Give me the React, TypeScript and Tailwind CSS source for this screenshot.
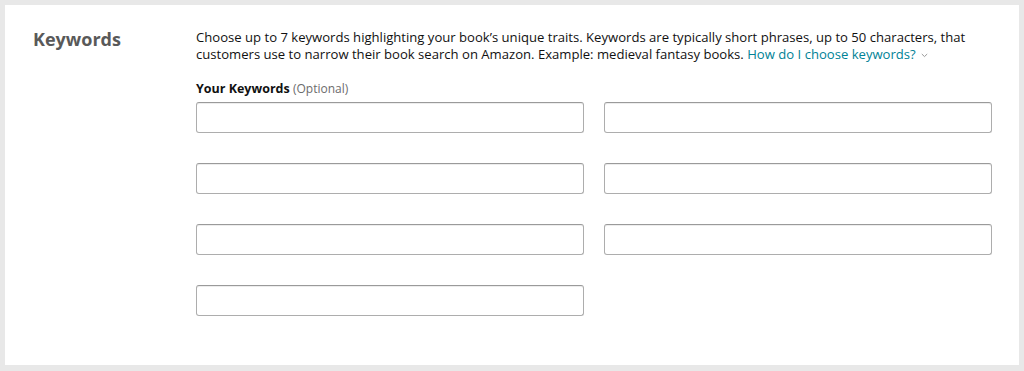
import React from "react";

function KInput() {
  return (
    <input
      type="text"
      className="h-[31px] w-full rounded-[3px] border border-[#adadad] border-t-[#9a9a9a] bg-white px-2 text-[13px] shadow-[inset_0_1px_0_rgba(0,0,0,0.07)] outline-none"
    />
  );
}

export default function App() {
  return (
    <div className="min-h-[371px] w-[1024px] bg-[#e8e8e8] pt-[5px] pl-[5px] pr-[5px] pb-[6px] font-['Open_Sans',sans-serif]">
      <div className="flex h-[360px] bg-white">
        <div className="w-[191px] shrink-0 pl-[28px] pt-[22px]">
          <h2 className="text-[18px] font-bold leading-[24px] text-[#595959]">Keywords</h2>
        </div>
        <div className="flex-1 pr-[27px] pt-[24px]">
          <p className="text-[13.1px] leading-[17px] text-[#111]">
            Choose up to 7 keywords highlighting your book’s unique traits. Keywords are typically short phrases, up to 50 characters, that customers use to narrow their book search on Amazon. Example: medieval fantasy books.{" "}
            <span className="text-[#008296]">How do I choose keywords?</span>
            <svg className="ml-[5px] inline-block align-middle" width="7" height="5" viewBox="0 0 7 5" fill="none">
              <path d="M0.8 1 L3.5 3.6 L6.2 1" stroke="#999" strokeWidth="1" />
            </svg>
          </p>
          <div className="mt-[18px] text-[12.5px] leading-[16px] text-[#111]">
            <span className="font-bold">Your Keywords</span>{" "}
            <span className="text-[12px] text-[#6c6c6c]">(Optional)</span>
          </div>
          <div className="mt-[5px] grid grid-cols-2 gap-x-[20px] gap-y-[30px]">
            <KInput />
            <KInput />
            <KInput />
            <KInput />
            <KInput />
            <KInput />
            <KInput />
          </div>
        </div>
      </div>
    </div>
  );
}
